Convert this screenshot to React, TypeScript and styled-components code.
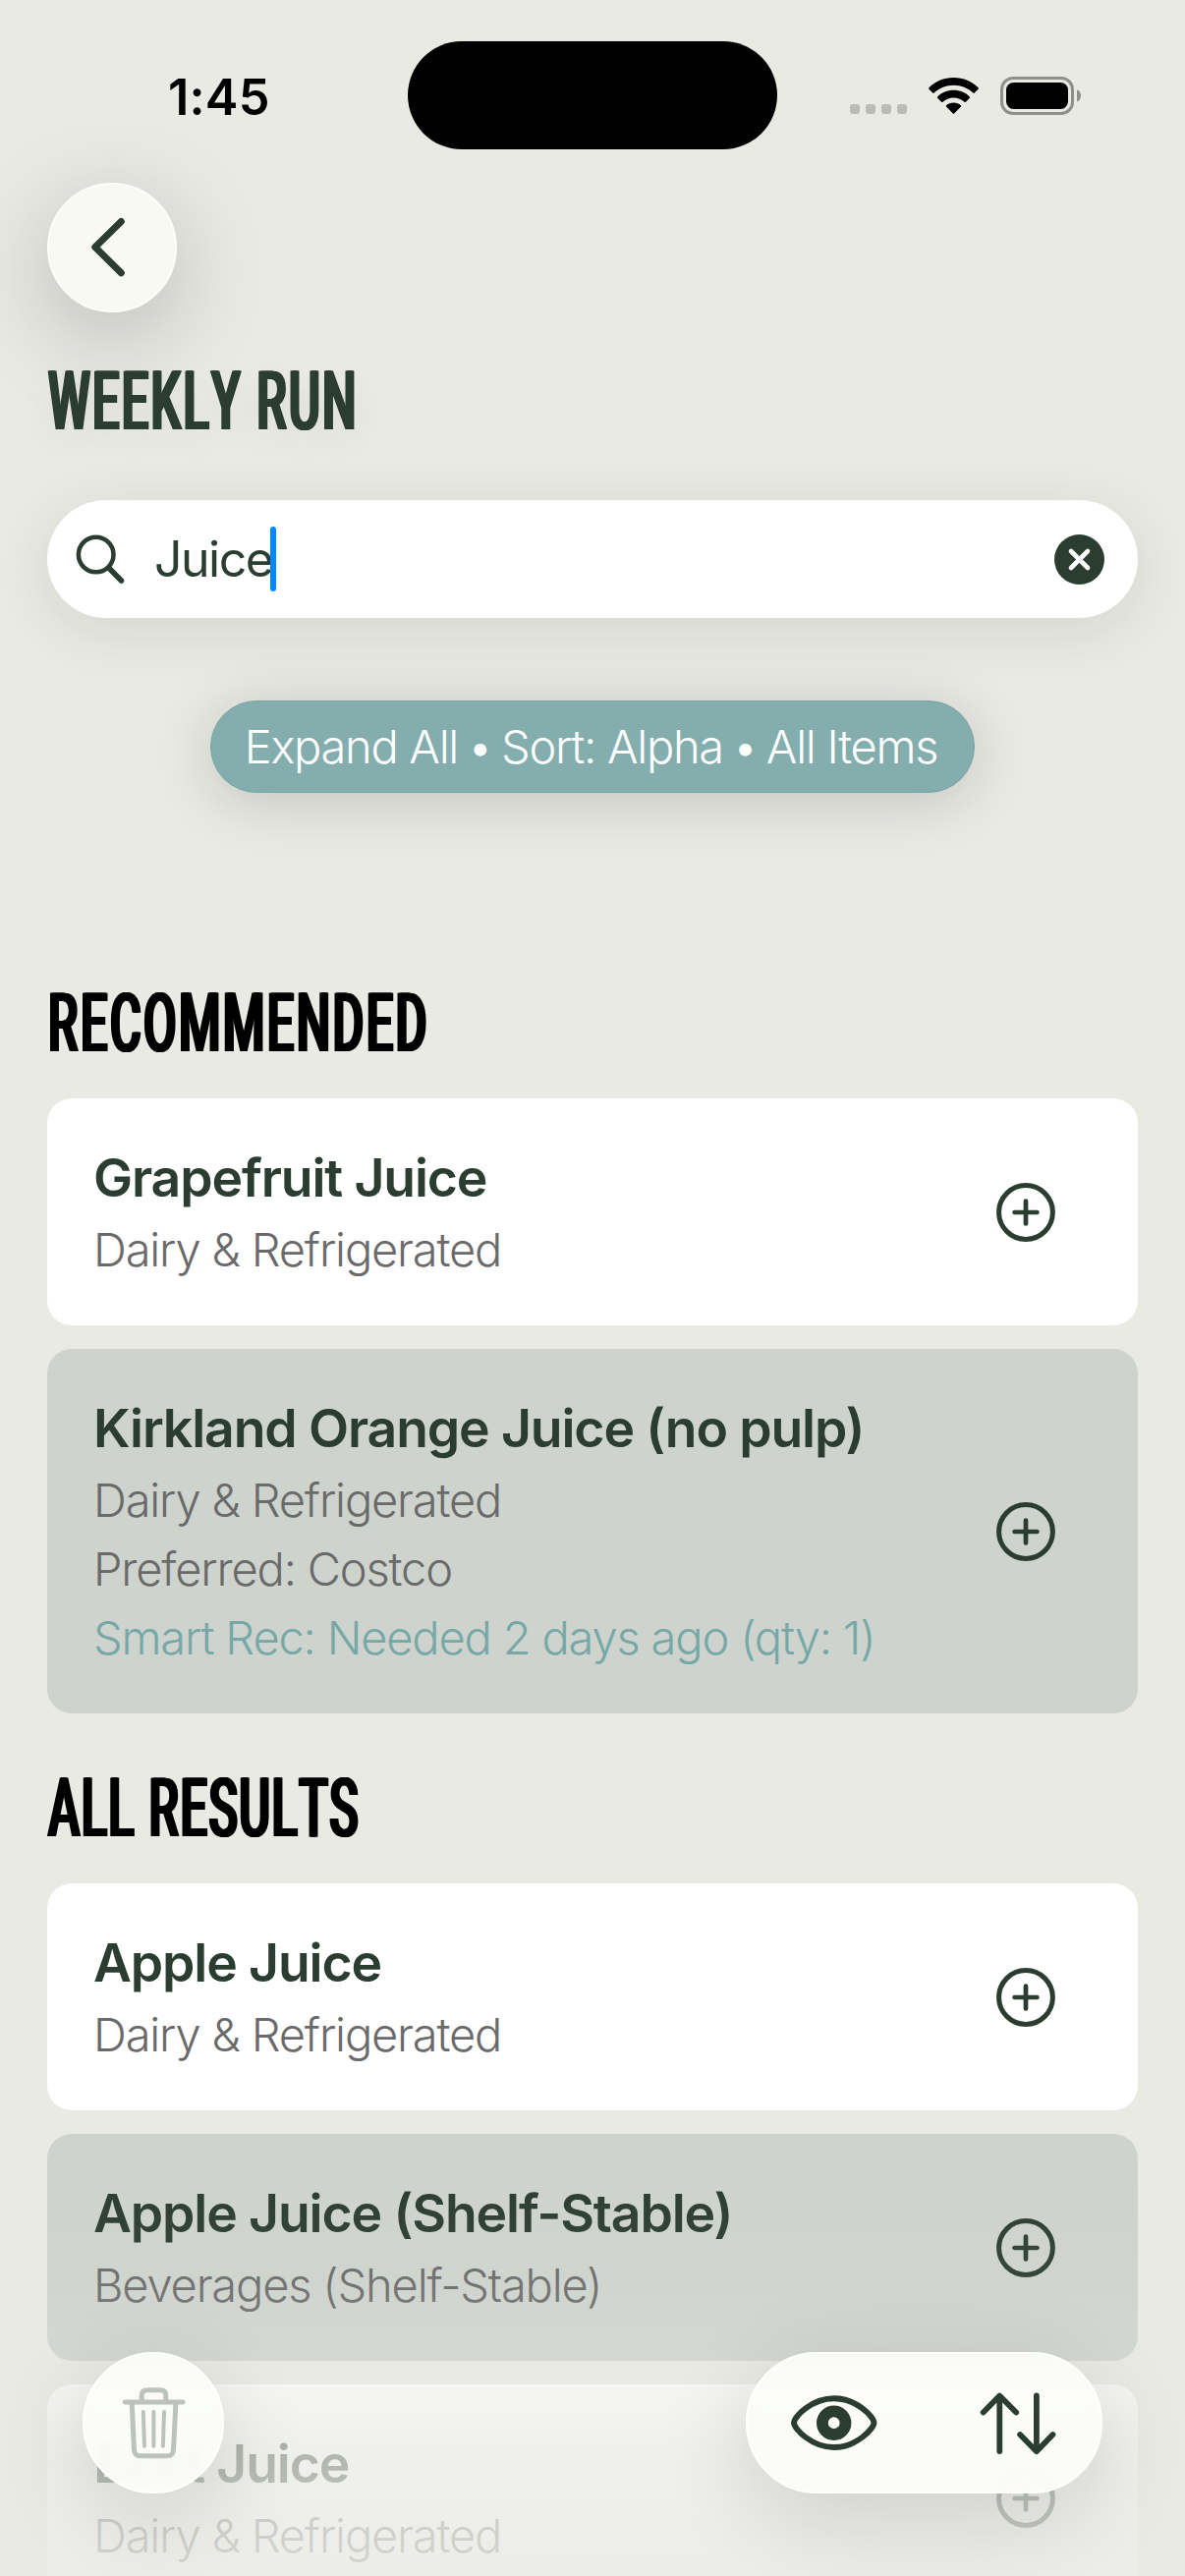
import React from "react";
import styled, { createGlobalStyle, css } from "styled-components";

const ink = "#2b3d30";
const paper = "#e9eae4";

const GlobalStyle = createGlobalStyle`
  * { box-sizing: border-box; }
  html, body { margin: 0; padding: 0; background: ${paper}; }
  body { font-family: Inter, Roboto, "Liberation Sans", sans-serif; overflow: hidden; }
  button { border: 0; padding: 0; font: inherit; }
`;

const Screen = styled.main`
  position: relative;
  width: 1206px;
  height: 2622px;
  overflow: hidden;
  background: ${paper};
  color: ${ink};
  display: flex;
  flex-direction: column;
`;

const StatusBar = styled.div`
  height: 186px;
  flex: none;
  display: grid;
  grid-template-columns: 415px 376px 415px;
  align-items: start;
`;

const Clock = styled.div`
  margin-top: 68px;
  padding-left: 171px;
  font-size: 50.5px;
  line-height: 61px;
  font-weight: 600;
  letter-spacing: 0.2px;
  color: #000;
`;

const Island = styled.div`
  margin-top: 42px;
  height: 110px;
  border-radius: 55px;
  background: #000;
`;

const StatusIcons = styled.div`
  margin-top: 78px;
  padding-left: 74px;
  display: flex;
  gap: 22px;
`;

const SignalDots = styled.div`
  display: flex;
  gap: 6px;
  padding-top: 28px;
`;

const Dot = styled.i`
  width: 10px;
  height: 10px;
  border-radius: 3px;
  background: #bbbcb7;
`;

const BackButton = styled.button`
  flex: none;
  width: 132px;
  height: 132px;
  margin-left: 48px;
  border-radius: 50%;
  border: 2px solid #fdfefa;
  background: #f8f9f3;
  box-shadow: 0 24px 96px rgba(0, 0, 0, 0.21);
  color: ${ink};
  display: flex;
`;

const Heading = styled.h2<{ $tracking: number; $tone?: string; $glow?: boolean; $gap: number; $after: number }>`
  flex: none;
  margin: ${(p) => p.$gap}px 0 ${(p) => p.$after}px 49px;
  height: 98px;
  font-family: Roboto, "Liberation Sans", sans-serif;
  font-size: 83px;
  line-height: 98px;
  font-weight: 500;
  font-kerning: none;
  letter-spacing: ${(p) => p.$tracking}px;
  white-space: nowrap;
  color: ${(p) => p.$tone ?? "#000"};
  width: max-content;
  transform: scaleX(0.585);
  transform-origin: left;
  text-shadow:
    -2.6px 0 currentColor,
    -1.3px 0 currentColor,
    1.3px 0 currentColor,
    2.6px 0 currentColor
    ${(p) => p.$glow && css`, 0 12px 48px rgba(0, 0, 0, 0.08)`};
`;

const SearchBar = styled.div`
  flex: none;
  height: 120px;
  margin: 0 48px;
  padding: 0 34px 0 29px;
  border-radius: 60px;
  background: #fff;
  box-shadow: 0 12px 60px rgba(40, 45, 30, 0.11);
  display: flex;
  align-items: center;
`;

const Query = styled.span`
  margin-left: 30px;
  font-size: 50px;
  line-height: 66px;
  letter-spacing: -1.5px;
`;

const Caret = styled.i`
  width: 6px;
  height: 66px;
  margin-left: -2px;
  border-radius: 3px;
  background: #0088ff;
`;

const ClearButton = styled.button`
  margin-left: auto;
  width: 51px;
  height: 51px;
  border-radius: 50%;
  background: ${ink};
  display: flex;
`;

const FilterPill = styled.div`
  flex: none;
  align-self: center;
  width: 778px;
  height: 94px;
  margin-top: 84px;
  padding-right: 3px;
  border-radius: 47px;
  background: #83aead;
  border: 1px solid #7ba5a4;
  box-shadow: 0 8px 60px rgba(0, 0, 0, 0.17);
  color: #fff;
  display: flex;
  align-items: center;
  justify-content: center;
  font-size: 47px;
  font-weight: 300;
  line-height: 58px;
  letter-spacing: -1.3px;
  white-space: pre;
`;

const Bullet = styled.span`
  margin: 0 -2.5px;
`;

const List = styled.section`
  flex: none;
  margin: 0 48px;
  display: flex;
  flex-direction: column;
  gap: 24px;
`;

const Card = styled.article<{ $shaded?: boolean }>`
  padding: 48px 84px 48px 47px;
  border-radius: 25px;
  background: ${(p) => (p.$shaded ? "#ced3cd" : "#fff")};
  display: flex;
  align-items: center;
  justify-content: space-between;
`;

const Details = styled.div`
  display: flex;
  flex-direction: column;
  gap: 12px;
  white-space: nowrap;
`;

const ItemName = styled.h3`
  margin: 0;
  font-size: 53.5px;
  line-height: 65px;
  font-weight: 600;
  letter-spacing: -1.12px;
  color: ${ink};
`;

const ItemNote = styled.p<{ $smart?: boolean }>`
  margin: 0;
  font-size: 47px;
  line-height: 58px;
  font-weight: 300;
  letter-spacing: -1.17px;
  color: ${(p) => (p.$smart ? "#76a8a7" : "#6a6a6a")};
`;

const BottomFade = styled.div`
  position: absolute;
  left: 0;
  right: 0;
  bottom: 0;
  height: 422px;
  background: linear-gradient(
    to bottom,
    rgba(233, 234, 228, 0) 0%,
    rgba(233, 234, 228, 0.06) 28%,
    rgba(233, 234, 228, 0.22) 47%,
    rgba(233, 234, 228, 0.47) 55%,
    rgba(233, 234, 228, 0.7) 70%,
    rgba(233, 234, 228, 0.78) 85%,
    rgba(233, 234, 228, 0.84) 100%
  );
`;

const Toolbar = styled.nav`
  position: absolute;
  left: 84px;
  right: 84px;
  bottom: 84px;
  display: flex;
  justify-content: space-between;
`;

const Glass = styled.div<{ $width: number }>`
  width: ${(p) => p.$width}px;
  height: 144px;
  border-radius: 72px;
  border: 2px solid #fefffc;
  background: rgba(252, 253, 248, 0.92);
  backdrop-filter: blur(5px);
  box-shadow: 0 24px 96px rgba(0, 0, 0, 0.14);
  display: flex;
  color: ${ink};
`;

const AddIcon = () => (
  <svg width="60" height="60" viewBox="0 0 60 60" fill="none" stroke={ink} strokeLinecap="round">
    <circle cx="30" cy="30" r="27.4" strokeWidth="5" />
    <path d="M30 18.6V41.4M18.6 30H41.4" strokeWidth="4.7" />
  </svg>
);

const WifiIcon = () => (
  <svg width="51" height="39" viewBox="0 0 51 39">
    <path d="M25.5 1C35.5 1 44.4 5 50.6 11.3C51 11.7 51 12.3 50.6 12.7L46.7 16.6C46.3 17 45.7 17 45.3 16.6C40.2 11.6 33.2 8.7 25.5 8.7S10.8 11.6 5.7 16.6C5.3 17 4.7 17 4.3 16.6L.4 12.7C0 12.3 0 11.7 .4 11.3C6.6 5 15.5 1 25.5 1Z" />
    <path d="M25.5 13.8C31.9 13.8 37.7 16.3 41.9 20.4C42.3 20.8 42.3 21.4 41.9 21.8L37.9 25.8C37.5 26.2 36.9 26.2 36.5 25.8C33.6 23.1 29.8 21.5 25.5 21.5S17.4 23.1 14.5 25.8C14.1 26.2 13.5 26.2 13.1 25.8L9.1 21.8C8.7 21.4 8.7 20.8 9.1 20.4C13.3 16.3 19.1 13.8 25.5 13.8Z" />
    <path d="M25.5 26.5C28.3 26.5 30.9 27.5 32.9 29.2C33.3 29.6 33.4 30.2 33 30.6L26.2 37.5C25.8 37.9 25.2 37.9 24.8 37.5L18 30.6C17.6 30.2 17.7 29.6 18.1 29.2C20.1 27.5 22.7 26.5 25.5 26.5Z" />
  </svg>
);

const BatteryIcon = () => (
  <svg width="83" height="39" viewBox="0 0 83 39">
    <rect x="1.5" y="1.5" width="72" height="36" rx="11.5" fill="none" stroke="#8f908b" strokeWidth="3" />
    <rect x="6" y="6" width="63" height="27" rx="7.5" />
    <path d="M78 13.2C80.6 14.2 82 16.7 82 19.4S80.6 24.6 78 25.6Z" fill="#8f908b" />
  </svg>
);

const SearchIcon = () => (
  <svg width="50" height="50" viewBox="0 0 50 50" fill="none" stroke={ink} strokeLinecap="round">
    <circle cx="20.7" cy="20.5" r="17.8" strokeWidth="4.5" />
    <path d="M34.2 34.5L46.5 47" strokeWidth="5.6" />
  </svg>
);

const TrashIcon = () => (
  <svg width="140" height="140" viewBox="86 2396 140 140" fill="none" stroke="#bcc3bc" strokeLinecap="round" strokeLinejoin="round">
    <path d="M127.3 2445H186" strokeWidth="5" />
    <path d="M144.2 2444V2438.5Q144.2 2432.7 150 2432.7H163Q168.8 2432.7 168.8 2438.5V2444" strokeWidth="5" strokeLinecap="butt" />
    <path d="M134.2 2446L136.5 2493.5Q136.9 2499.8 143 2499.8H170Q176.2 2499.8 176.5 2493.5L178.9 2446" strokeWidth="5" />
    <path d="M145.8 2455L147 2489.8M156.4 2455V2489.8M167 2455L165.9 2489.8" strokeWidth="4" />
  </svg>
);

const ViewSortIcons = () => (
  <svg width="359" height="140" viewBox="761 2396 359 140" fill="none" stroke={ink} strokeLinecap="round" strokeLinejoin="round">
    <path d="M808 2466C808 2460 826 2441.3 848.7 2441.3S889.5 2460 889.5 2466S871.4 2491 848.7 2491S808 2472 808 2466Z" strokeWidth="5.9" />
    <circle cx="848.7" cy="2466.2" r="11.8" strokeWidth="11.8" />
    <path d="M1017.3 2495V2439M1000.7 2455.5L1017.3 2438.5L1034.2 2455.5" strokeWidth="5.8" />
    <path d="M1054.9 2438.5V2495M1038.1 2478L1054.9 2495.2L1071.5 2478" strokeWidth="5.8" />
  </svg>
);

type Item = { name: string; notes: string[]; smart?: string; shaded?: boolean };

const recommended: Item[] = [
  { name: "Grapefruit Juice", notes: ["Dairy & Refrigerated"] },
  {
    name: "Kirkland Orange Juice (no pulp)",
    notes: ["Dairy & Refrigerated", "Preferred: Costco"],
    smart: "Smart Rec: Needed 2 days ago (qty: 1)",
    shaded: true,
  },
];

const results: Item[] = [
  { name: "Apple Juice", notes: ["Dairy & Refrigerated"] },
  { name: "Apple Juice (Shelf-Stable)", notes: ["Beverages (Shelf-Stable)"], shaded: true },
  { name: "Beet Juice", notes: ["Dairy & Refrigerated"] },
];

const ItemCard = ({ item }: { item: Item }) => (
  <Card $shaded={item.shaded}>
    <Details>
      <ItemName>{item.name}</ItemName>
      {item.notes.map((note) => (
        <ItemNote key={note}>{note}</ItemNote>
      ))}
      {item.smart && <ItemNote $smart>{item.smart}</ItemNote>}
    </Details>
    <AddIcon />
  </Card>
);

export default function App() {
  return (
    <Screen>
      <GlobalStyle />
      <StatusBar>
        <Clock>1:45</Clock>
        <Island />
        <StatusIcons>
          <SignalDots>
            <Dot />
            <Dot />
            <Dot />
            <Dot />
          </SignalDots>
          <WifiIcon />
          <BatteryIcon />
        </StatusIcons>
      </StatusBar>

      <BackButton aria-label="Back">
        <svg width="128" height="128" viewBox="50 188 128 128" fill="none" stroke={ink} strokeWidth="7" strokeLinecap="round" strokeLinejoin="round">
          <path d="M123.3 225.5L96.8 251.6L123.3 277.7" />
        </svg>
      </BackButton>
      <Heading $tracking={3.9} $tone={ink} $glow $gap={42} $after={51}>WEEKLY RUN</Heading>

      <SearchBar>
        <SearchIcon />
        <Query>Juice</Query>
        <Caret />
        <ClearButton aria-label="Clear">
          <svg width="51" height="51" viewBox="0 0 51 51" stroke="#fff" strokeWidth="4.6" strokeLinecap="round">
            <path d="M17 17L34 34M34 17L17 34" />
          </svg>
        </ClearButton>
      </SearchBar>

      <FilterPill>
        <span>
          Expand All <Bullet>•</Bullet> Sort: Alpha <Bullet>•</Bullet> All Items
        </span>
      </FilterPill>

      <Heading $tracking={4.2} $gap={186} $after={27}>RECOMMENDED</Heading>
      <List>
        {recommended.map((item) => (
          <ItemCard key={item.name} item={item} />
        ))}
      </List>

      <Heading $tracking={2.5} $gap={48} $after={27}>ALL RESULTS</Heading>
      <List>
        {results.map((item) => (
          <ItemCard key={item.name} item={item} />
        ))}
      </List>

      <BottomFade />
      <Toolbar>
        <Glass $width={144}>
          <TrashIcon />
        </Glass>
        <Glass $width={363}>
          <ViewSortIcons />
        </Glass>
      </Toolbar>
    </Screen>
  );
}
